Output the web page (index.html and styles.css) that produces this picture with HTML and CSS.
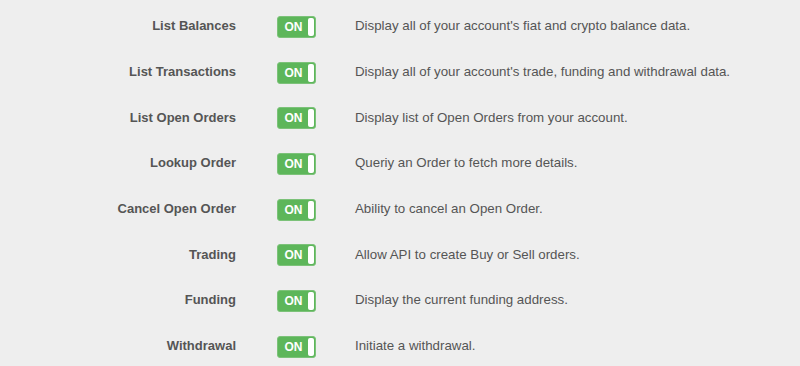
FILE: index.html
```html
<!DOCTYPE html>
<html lang="en">
<head>
    <meta charset="UTF-8">
    <title>API Permissions</title>
    <link rel="stylesheet" href="styles.css">
</head>
<body>
    <div class="perm-list">
        <div class="perm-row">
            <div class="perm-name">List Balances</div>
            <div class="toggle"><span>ON</span><i class="knob"></i></div>
            <div class="perm-desc">Display all of your account's fiat and crypto balance data.</div>
        </div>
        <div class="perm-row">
            <div class="perm-name">List Transactions</div>
            <div class="toggle"><span>ON</span><i class="knob"></i></div>
            <div class="perm-desc">Display all of your account's trade, funding and withdrawal data.</div>
        </div>
        <div class="perm-row">
            <div class="perm-name">List Open Orders</div>
            <div class="toggle"><span>ON</span><i class="knob"></i></div>
            <div class="perm-desc">Display list of Open Orders from your account.</div>
        </div>
        <div class="perm-row">
            <div class="perm-name">Lookup Order</div>
            <div class="toggle"><span>ON</span><i class="knob"></i></div>
            <div class="perm-desc">Queriy an Order to fetch more details.</div>
        </div>
        <div class="perm-row">
            <div class="perm-name">Cancel Open Order</div>
            <div class="toggle"><span>ON</span><i class="knob"></i></div>
            <div class="perm-desc">Ability to cancel an Open Order.</div>
        </div>
        <div class="perm-row">
            <div class="perm-name">Trading</div>
            <div class="toggle"><span>ON</span><i class="knob"></i></div>
            <div class="perm-desc">Allow API to create Buy or Sell orders.</div>
        </div>
        <div class="perm-row">
            <div class="perm-name">Funding</div>
            <div class="toggle"><span>ON</span><i class="knob"></i></div>
            <div class="perm-desc">Display the current funding address.</div>
        </div>
        <div class="perm-row">
            <div class="perm-name">Withdrawal</div>
            <div class="toggle"><span>ON</span><i class="knob"></i></div>
            <div class="perm-desc">Initiate a withdrawal.</div>
        </div>
    </div>
</body>
</html>
```

FILE: styles.css
```css
* {
    margin: 0;
    padding: 0;
    box-sizing: border-box;
}

body {
    font-family: 'Liberation Sans', Arial, sans-serif;
    background: #eeeeee;
    color: #555;
    font-size: 13.3px;
}

.perm-list {
    padding-top: 3px;
}

.perm-row {
    display: grid;
    grid-template-columns: 236px 39px 1fr;
    column-gap: 40px;
    align-items: center;
    height: 45.7px;
}

.perm-name {
    text-align: right;
    font-weight: bold;
    font-size: 13px;
    color: #555;
}

.perm-desc {
    color: #555;
}

/* on/off switch, always shown in the "on" state here */
.toggle {
    margin-left: 1px;
    margin-top: 2px;
    width: 39px;
    height: 22px;
    background: #5db65a;
    border: 1px solid #7cc279;
    border-radius: 3px;
    display: flex;
    align-items: center;
    padding-right: 1px;
}

.toggle span {
    flex: 1;
    color: #fff;
    font-weight: bold;
    font-size: 12px;
    text-align: center;
    padding-left: 1px;
}

.knob {
    width: 6px;
    height: 18px;
    background: #fff;
    border-radius: 2px;
}
```
